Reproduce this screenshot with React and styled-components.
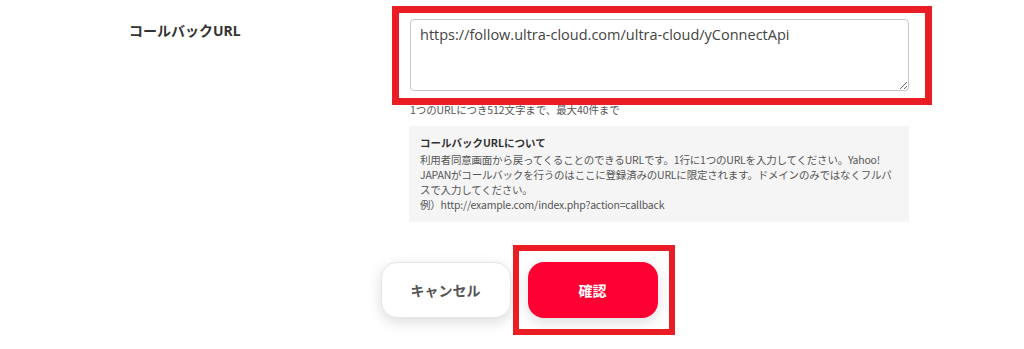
import React from "react";
import styled, { createGlobalStyle } from "styled-components";

const GlobalStyle = createGlobalStyle`
  html, body {
    margin: 0;
    padding: 0;
    background: #fff;
  }
  body {
    font-family: "Noto Sans", "Noto Sans CJK JP", sans-serif;
    color: #333;
  }
`;

const MARK = "#ea1c24";
const JP = `"Noto Sans CJK JP", "Noto Sans", sans-serif`;

const Page = styled.div`
  box-sizing: border-box;
  width: 909px;
  min-height: 349px;
  padding: 19px 0 0 129px;
`;

const FormRow = styled.div`
  display: grid;
  grid-template-columns: 281px 499px;
`;

const Label = styled.div`
  font-size: 14px;
  font-weight: 700;
  line-height: 20px;
  color: #333;
  padding-top: 2px;
`;

const Field = styled.div`
  display: flex;
  flex-direction: column;
`;

const Marked = styled.div`
  position: relative;
  display: flex;
  &::after {
    content: "";
    position: absolute;
    top: ${(p) => p.$inset[0]}px;
    right: ${(p) => p.$inset[1]}px;
    bottom: ${(p) => p.$inset[2]}px;
    left: ${(p) => p.$inset[3]}px;
    border: ${(p) => p.$width}px solid ${MARK};
    pointer-events: none;
  }
`;

const TextArea = styled.textarea`
  box-sizing: border-box;
  width: 499px;
  height: 72px;
  margin: 0;
  padding: 4px 9px;
  border: 1px solid #c8c8c8;
  border-radius: 4px;
  font-family: "Open Sans", "Noto Sans CJK JP", sans-serif;
  font-size: 14.5px;
  line-height: 21px;
  color: #444;
  background: #fff;
  outline: none;
`;

const Hint = styled.div`
  margin-top: 12px;
  font-family: ${JP};
  font-size: 10.5px;
  letter-spacing: -0.1px;
  line-height: 14px;
  color: #555;
`;

const InfoBox = styled.div`
  box-sizing: border-box;
  width: 500px;
  margin: 9px 0 0 -1px;
  padding: 9px 11px 10px;
  background: #f5f5f5;
  font-family: ${JP};
`;

const InfoTitle = styled.div`
  font-size: 10.5px;
  font-weight: 700;
  line-height: 15px;
  color: #333;
  margin-bottom: 2px;
`;

const InfoText = styled.div`
  font-size: 10.5px;
  letter-spacing: -0.2px;
  line-height: 15px;
  color: #555;
  white-space: nowrap;
`;

const Actions = styled.div`
  display: flex;
  justify-content: center;
  gap: 17px;
  margin-top: 40px;
`;

const Button = styled.button`
  width: 130px;
  height: 56px;
  border-radius: 16px;
  border: ${(p) => (p.$primary ? "none" : "1px solid #e6e6e6")};
  background: ${(p) => (p.$primary ? "#ff0033" : "#fff")};
  color: ${(p) => (p.$primary ? "#fff" : "#555")};
  font-family: "Noto Sans", "Noto Sans CJK JP", sans-serif;
  font-size: 14px;
  font-weight: 700;
  box-shadow: 0 4px 14px rgba(0, 0, 0, 0.14);
  cursor: pointer;
`;

export default function App() {
  return (
    <>
      <GlobalStyle />
      <Page>
        <FormRow>
          <Label>コールバックURL</Label>
          <Field>
            <Marked $inset={[-13, -23, -14, -18]} $width={7}>
              <TextArea defaultValue="https://follow.ultra-cloud.com/ultra-cloud/yConnectApi" />
            </Marked>
            <Hint>1つのURLにつき512文字まで、最大40件まで</Hint>
            <InfoBox>
              <InfoTitle>コールバックURLについて</InfoTitle>
              <InfoText>
                利用者同意画面から戻ってくることのできるURLです。1行に1つのURLを入力してください。Yahoo!
                <br />
                JAPANがコールバックを行うのはここに登録済みのURLに限定されます。ドメインのみではなくフルパ
                <br />
                スで入力してください。
                <br />
                例）http://example.com/index.php?action=callback
              </InfoText>
            </InfoBox>
          </Field>
        </FormRow>
        <Actions>
          <Button>キャンセル</Button>
          <Marked $inset={[-17, -17, -17, -15]} $width={6}>
            <Button $primary>確認</Button>
          </Marked>
        </Actions>
      </Page>
    </>
  );
}
